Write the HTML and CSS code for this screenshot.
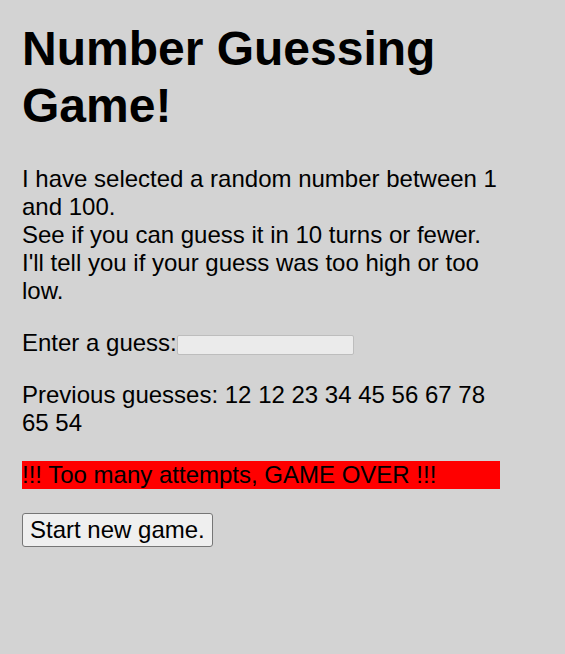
FILE: index.html
```html
<!DOCTYPE html>
<html>
<head>
<meta charset="utf-8">
<title>Number Guessing Game</title>
<link rel="stylesheet" href="styles.css">
</head>
<body>
<main class="game">
  <h1 class="title">Number Guessing Game!</h1>
  <p class="intro">I have selected a random number between 1 and 100.<br>See if you can guess it in 10 turns or fewer.<br>I'll tell you if your guess was too high or too low.</p>
  <p class="entry"><label for="guess">Enter a guess:</label><input id="guess" class="guess-field" type="text" disabled></p>
  <p class="previous">Previous guesses: 12 12 23 34 45 56 67 78 65 54</p>
  <p class="result">!!! Too many attempts, GAME OVER !!!</p>
  <button class="restart" type="button">Start new game.</button>
</main>
</body>
</html>
```
FILE: styles.css
```css
html, body {
  margin: 0;
  padding: 0;
  background: #d3d3d3;
}
body {
  font-family: "Liberation Sans", Arial, sans-serif;
  font-size: 24px;
  color: #000;
}
.game {
  width: 478px;
  padding: 20px 22px 0;
}
.title {
  font-size: 48px;
  font-weight: bold;
  margin: 0 0 31px;
  line-height: 57px;
}
.intro, .entry, .previous, .result {
  margin: 0 0 24px;
  line-height: normal;
}
.entry {
  display: flex;
  align-items: flex-start;
}
.guess-field {
  box-sizing: border-box;
  height: 20px;
  width: 177px;
  margin: 6px 0 0;
  padding: 0;
  background: #ebebeb;
  border: 1px solid #bdbdbd;
  border-radius: 2px;
}
.result {
  background: #ff0000;
}
.restart {
  font-family: "Liberation Sans", Arial, sans-serif;
  font-size: 24px;
  color: #000;
  background: #efefef;
  border: 1px solid #767676;
  border-radius: 3px;
  padding: 2px 7px;
  height: 34px;
  line-height: 28px;
}
```
